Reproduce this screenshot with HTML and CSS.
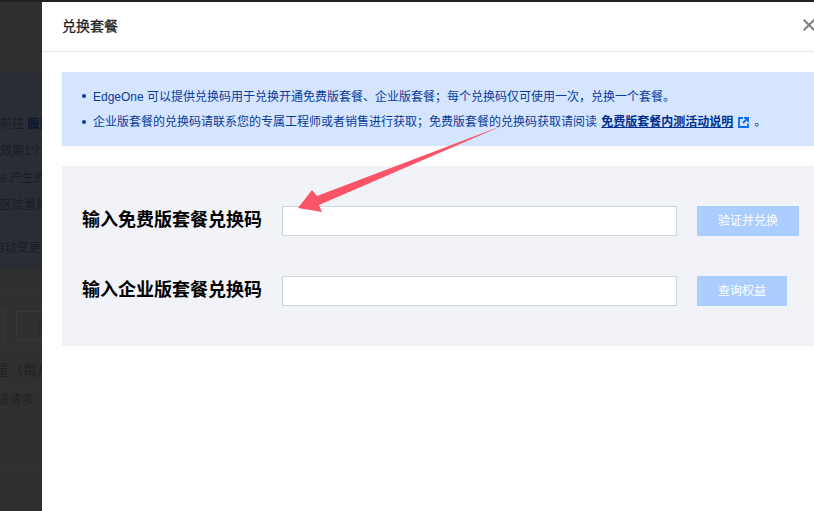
FILE: index.html
```html
<!DOCTYPE html>
<html lang="zh">
<head>
<meta charset="utf-8">
<title>兑换套餐</title>
<link rel="stylesheet" href="styles.css">
</head>
<body>
<div class="page">
  <aside class="backdrop">
    <div class="bd-notice">
      <p class="bd-line">前往 <b>服务</b></p>
      <p class="bd-line">效期1个</p>
      <p class="bd-line">e 产生的</p>
      <p class="bd-line">区流量担</p>
      <p class="bd-line l5">自动变更</p>
    </div>
    <div class="bd-tabs"><span class="bd-box first"></span><span class="bd-box">担</span></div>
    <div class="bd-row r1">量（每月</div>
    <div class="bd-row r2">速请求</div>
    <div class="bd-rule"></div>
  </aside>
  <main class="modal">
    <header class="modal-head">
      <h1>兑换套餐</h1>
      <svg class="close" viewBox="0 0 12 12" width="12" height="12"><path d="M.7.7l10.600 10.600M11.300.7L.7 11.300" stroke="#808080" stroke-width="2" fill="none"/></svg>
    </header>
    <section class="notice">
      <ul>
        <li>EdgeOne 可以提供兑换码用于兑换开通免费版套餐、企业版套餐；每个兑换码仅可使用一次，兑换一个套餐。</li>
        <li>企业版套餐的兑换码请联系您的专属工程师或者销售进行获取；免费版套餐的兑换码获取请阅读 <a href="#">免费版套餐内测活动说明</a><svg class="ext" viewBox="0 0 11 11" width="11" height="11"><path d="M5 1H1v9h9V6.500" stroke="#0a6cf5" stroke-width="1.800" fill="none"/><path d="M6 .9h4.100V5M10 1L5 6" stroke="#0a6cf5" stroke-width="1.800" fill="none"/></svg><span class="dot">。</span></li>
      </ul>
    </section>
    <section class="form">
      <div class="form-row">
        <label>输入免费版套餐兑换码</label>
        <input type="text">
        <button type="button">验证并兑换</button>
      </div>
      <div class="form-row">
        <label>输入企业版套餐兑换码</label>
        <input type="text">
        <button type="button">查询权益</button>
      </div>
    </section>
  </main>
  <svg class="arrow" viewBox="0 0 814 511" width="814" height="511"><polygon points="504,125 319,205 322,212 298,208 312,190 317,196" fill="#fb5468"/></svg>
</div>
</body>
</html>
```
FILE: styles.css
```css
* { box-sizing: border-box; }
html, body { margin: 0; height: 100%; }
body {
  background: #303030;
  font-family: "Liberation Sans", "Noto Sans CJK SC", sans-serif;
  overflow: hidden;
}
.page {
  position: relative;
  display: flex;
  width: 814px;
  height: 511px;
  background: #303030;
  border-top: 2px solid #202020;
}
.backdrop {
  width: 42px;
  flex: none;
  overflow: hidden;
  color: #191c26;
  font-size: 12px;
  white-space: nowrap;
}
.bd-notice {
  margin-top: 71px;
  height: 196px;
  padding-top: 42px;
  background: #2a2d34;
}
.bd-line { margin: 0 0 9px; line-height: 18px; height: 18px; }
.bd-line b { font-weight: 700; color: #0b1533; }
.bd-line.l5 { margin: 25px 0 0 -7px; }
.bd-tabs {
  display: flex;
  gap: 11px;
  margin-top: 21px;
  padding-top: 20px;
  height: 61px;
  border-top: 1px solid #343434;
  border-bottom: 1px solid #343434;
}
.bd-box {
  flex: none;
  width: 40px;
  height: 29px;
  border: 1px solid #383838;
  padding: 5px 0 0 20px;
  color: #23262e;
}
.bd-box.first { width: 5px; border-left: 0; padding: 0; }
.bd-row { color: #232323; line-height: 18px; }
.bd-row.r1 { margin: 10px 0 0 -5px; font-size: 14px; font-weight: 500; }
.bd-row.r2 { margin: 11px 0 0; padding-left: 0; text-indent: -3px; border-top: 1px solid #343434; }
.bd-rule { margin-top: 56px; border-top: 1px solid #343434; }
.modal {
  flex: 1;
  min-width: 0;
  background: #fff;
  display: flex;
  flex-direction: column;
}
.modal-head {
  height: 50px;
  flex: none;
  border-bottom: 1px solid #e8e8e8;
  padding: 0 0 3px 20px;
  display: flex;
  align-items: center;
  justify-content: space-between;
}
.modal-head h1 {
  margin: 0;
  font-size: 14px;
  font-weight: 400;
  color: #1f1f1f;
  -webkit-text-stroke: .3px #1f1f1f;
}
.close { margin-right: -1px; }
.notice {
  margin: 20px 0 0 20px;
  height: 74px;
  background: #d4e5fd;
  color: #0a3b9e;
  font-size: 12px;
  padding: 12px 0 0 20px;
}
.notice ul { margin: 0; padding: 0; list-style: none; }
.notice li { position: relative; padding-left: 11px; height: 26px; line-height: 24px; white-space: nowrap; }
.notice li:first-child { padding-top: 1px; }
.notice li::before {
  content: "";
  position: absolute;
  left: 0;
  top: 10px;
  width: 4px;
  height: 4px;
  border-radius: 50%;
  background: #0a3b9e;
}
.notice a { color: #00308f; font-weight: 700; margin-left: 1px; }
.ext { vertical-align: -2px; margin-left: 5px; }
.dot { margin-left: 5px; }
.form {
  margin: 20px 0 0 20px;
  height: 180px;
  background: #f2f3f8;
  padding: 40px 0 0 20px;
  display: flex;
  flex-direction: column;
  gap: 40px;
}
.form-row { display: flex; align-items: center; height: 30px; }
.form-row label {
  width: 200px;
  flex: none;
  margin-bottom: 6px;
  font-size: 18px;
  font-weight: 700;
  color: #000;
}
.form-row input {
  width: 395px;
  height: 30px;
  flex: none;
  margin: 0;
  border: 1px solid #cfd5de;
  background: #fff;
  padding: 0;
}
.form-row button {
  margin-left: 20px;
  height: 30px;
  padding: 0 21px 3px;
  border: 0;
  background: #abcdff;
  color: #fff;
  font: inherit;
  font-size: 12px;
}
.arrow { position: absolute; left: 0; top: -2px; pointer-events: none; }
```
